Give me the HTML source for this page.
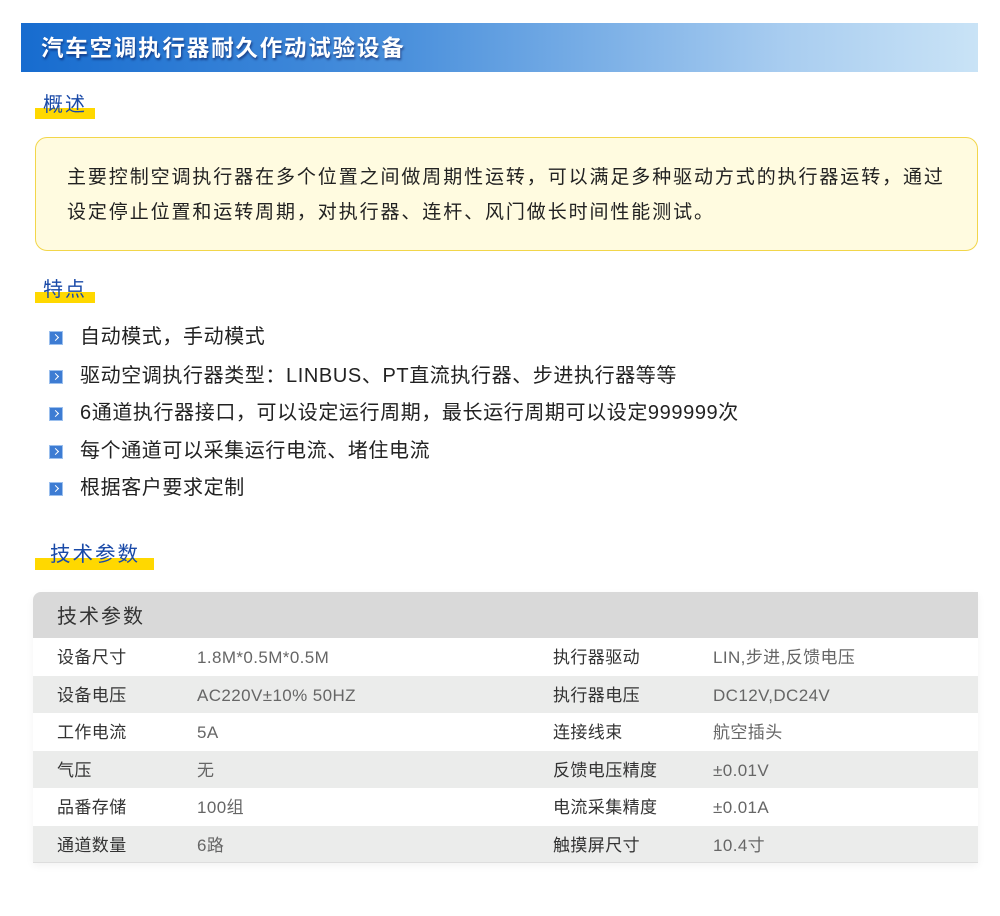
<!DOCTYPE html>
<html><head><meta charset="utf-8"><style>
*{margin:0;padding:0;box-sizing:border-box}
body{width:1000px;height:916px;background:#fff;font-family:"Liberation Sans","Noto Sans CJK SC",sans-serif;position:relative;overflow:hidden}
.abs{position:absolute}
.title{left:21px;top:23px;width:957px;height:49px;background:linear-gradient(90deg,#176ccf 0%,#4a90dc 40%,#a9cdf0 80%,#c9e3f6 100%);color:#fff;font-size:22.5px;letter-spacing:1.8px;font-weight:bold;line-height:51px;padding-left:20px;text-shadow:1px 2px 2px rgba(0,0,60,.5)}
.hbar{background:#ffd800;height:11px}
.h{color:#1a4aa8;font-size:20px;letter-spacing:2px;line-height:24px}
.box{left:35px;top:137px;width:943px;height:114px;background:#fffbe0;border:1px solid #f2d64a;border-radius:12px;padding:22px 25px 0 31px;font-size:19px;letter-spacing:1.9px;line-height:35px;color:#222}
.li{left:49px;font-size:20px;letter-spacing:0.6px;color:#222;line-height:24px}
.li i{position:absolute;left:0;top:6px;width:14px;height:14px;background:#3d7cd3;border:1px solid #9cc0ee}
.li i:after{content:"";position:absolute;left:3px;top:3px;width:4px;height:4px;border-right:1.5px solid #fff;border-top:1.5px solid #fff;transform:rotate(45deg)}
.li span{position:absolute;left:31px;white-space:nowrap}
.tbl{left:33px;top:592px;width:945px;border-radius:8px 0 0 0;overflow:hidden;box-shadow:0 3px 8px rgba(0,0,0,.05)}
.th{height:46px;background:#d9d9d9;font-size:20px;letter-spacing:2px;line-height:50px;padding-left:24px;color:#333}
.row{height:37.5px;position:relative;font-size:17px;letter-spacing:0.4px;line-height:40px;color:#333}
.row span{position:absolute;white-space:nowrap}
.v{color:#666}
</style></head><body>
<div class="abs title">汽车空调执行器耐久作动试验设备</div>

<div class="abs hbar" style="left:35px;top:108px;width:60px"></div>
<div class="abs h" style="left:43px;top:93px">概述</div>
<div class="abs box">主要控制空调执行器在多个位置之间做周期性运转，可以满足多种驱动方式的执行器运转，通过设定停止位置和运转周期，对执行器、连杆、风门做长时间性能测试。</div>

<div class="abs hbar" style="left:35px;top:292px;width:60px"></div>
<div class="abs h" style="left:43px;top:278px">特点</div>

<div class="abs li" style="top:325px"><i></i><span>自动模式，手动模式</span></div>
<div class="abs li" style="top:364px"><i></i><span>驱动空调执行器类型：LINBUS、PT直流执行器、步进执行器等等</span></div>
<div class="abs li" style="top:401px"><i></i><span>6通道执行器接口，可以设定运行周期，最长运行周期可以设定999999次</span></div>
<div class="abs li" style="top:439px"><i></i><span>每个通道可以采集运行电流、堵住电流</span></div>
<div class="abs li" style="top:476px"><i></i><span>根据客户要求定制</span></div>

<div class="abs hbar" style="left:35px;top:558px;width:119px;height:12px"></div>
<div class="abs h" style="left:50px;top:543px;font-size:20.5px">技术参数</div>

<div class="abs tbl">
<div class="th">技术参数</div>
<div>
<div class="row" style="background:#fff"><span style="left:24px">设备尺寸</span><span class="v" style="left:164px">1.8M*0.5M*0.5M</span><span style="left:520px">执行器驱动</span><span class="v" style="left:680px">LIN,步进,反馈电压</span></div>
<div class="row" style="background:#ebeceb"><span style="left:24px">设备电压</span><span class="v" style="left:164px">AC220V±10% 50HZ</span><span style="left:520px">执行器电压</span><span class="v" style="left:680px">DC12V,DC24V</span></div>
<div class="row" style="background:#fff"><span style="left:24px">工作电流</span><span class="v" style="left:164px">5A</span><span style="left:520px">连接线束</span><span class="v" style="left:680px">航空插头</span></div>
<div class="row" style="background:#ebeceb"><span style="left:24px">气压</span><span class="v" style="left:164px">无</span><span style="left:520px">反馈电压精度</span><span class="v" style="left:680px">±0.01V</span></div>
<div class="row" style="background:#fff"><span style="left:24px">品番存储</span><span class="v" style="left:164px">100组</span><span style="left:520px">电流采集精度</span><span class="v" style="left:680px">±0.01A</span></div>
<div class="row" style="background:#ebeceb;border-bottom:1px solid #ddd"><span style="left:24px">通道数量</span><span class="v" style="left:164px">6路</span><span style="left:520px">触摸屏尺寸</span><span class="v" style="left:680px">10.4寸</span></div>
</div>
</div>
</body></html>
